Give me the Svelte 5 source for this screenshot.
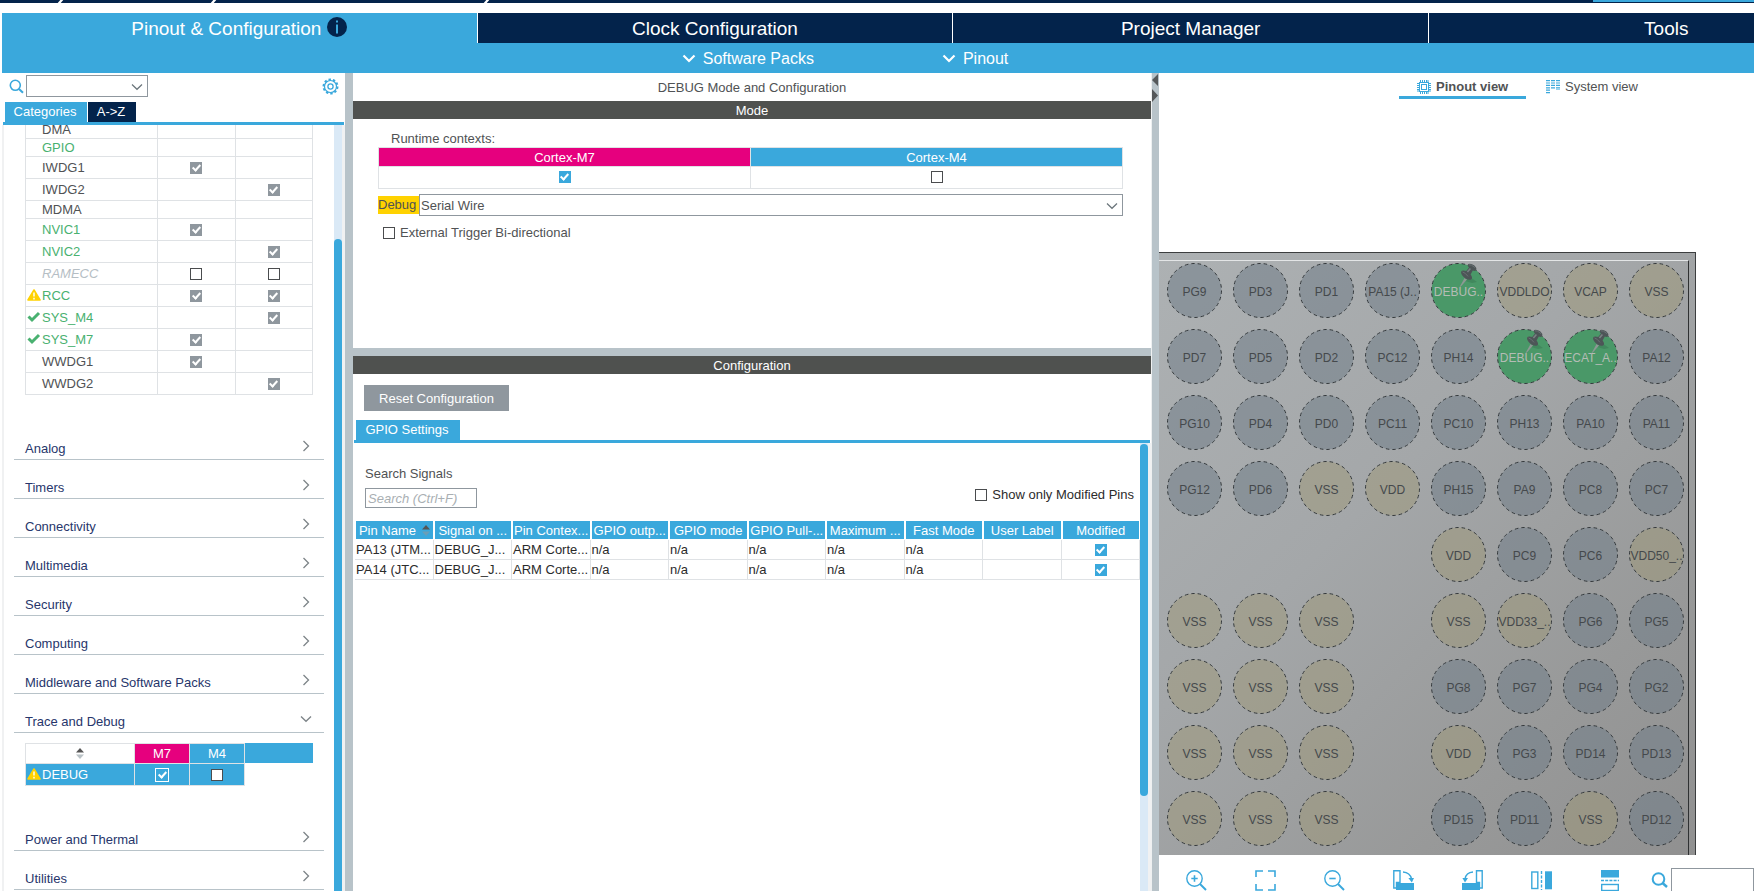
<script lang="ts">
	type Ip = { name: string; m7?: boolean; m4?: boolean; state?: string; icon?: string };

	const mainTabs = ['Pinout & Configuration', 'Clock Configuration', 'Project Manager', 'Tools'];

	// m7 / m4 left out means that no box is drawn for that core
	const systemCore: Ip[] = [
		{ name: 'DMA' },
		{ name: 'GPIO', state: 'used' },
		{ name: 'IWDG1', m7: true },
		{ name: 'IWDG2', m4: true },
		{ name: 'MDMA' },
		{ name: 'NVIC1', m7: true, state: 'used' },
		{ name: 'NVIC2', m4: true, state: 'used' },
		{ name: 'RAMECC', m7: false, m4: false, state: 'off' },
		{ name: 'RCC', m7: true, m4: true, state: 'used', icon: 'warning' },
		{ name: 'SYS_M4', m4: true, state: 'used', icon: 'ok' },
		{ name: 'SYS_M7', m7: true, state: 'used', icon: 'ok' },
		{ name: 'WWDG1', m7: true },
		{ name: 'WWDG2', m4: true }
	];

	const categories = [
		'Analog',
		'Timers',
		'Connectivity',
		'Multimedia',
		'Security',
		'Computing',
		'Middleware and Software Packs',
		'Trace and Debug',
		'Power and Thermal',
		'Utilities'
	];
	let open = $state('Trace and Debug');

	const columns = [
		'Pin Name',
		'Signal on ...',
		'Pin Contex...',
		'GPIO outp...',
		'GPIO mode',
		'GPIO Pull-...',
		'Maximum ...',
		'Fast Mode',
		'User Label',
		'Modified'
	];
	const signals = [
		['PA13 (JTM...', 'DEBUG_J...', 'ARM Corte...', 'n/a', 'n/a', 'n/a', 'n/a', 'n/a', ''],
		['PA14 (JTC...', 'DEBUG_J...', 'ARM Corte...', 'n/a', 'n/a', 'n/a', 'n/a', 'n/a', '']
	];

	// empty string = no ball at that place
	const balls = [
		['PG9', 'PD3', 'PD1', 'PA15 (J..', 'DEBUG..', 'VDDLDO', 'VCAP', 'VSS'],
		['PD7', 'PD5', 'PD2', 'PC12', 'PH14', 'DEBUG..', 'ECAT_A..', 'PA12'],
		['PG10', 'PD4', 'PD0', 'PC11', 'PC10', 'PH13', 'PA10', 'PA11'],
		['PG12', 'PD6', 'VSS', 'VDD', 'PH15', 'PA9', 'PC8', 'PC7'],
		['', '', '', '', 'VDD', 'PC9', 'PC6', 'VDD50_..'],
		['VSS', 'VSS', 'VSS', '', 'VSS', 'VDD33_..', 'PG6', 'PG5'],
		['VSS', 'VSS', 'VSS', '', 'PG8', 'PG7', 'PG4', 'PG2'],
		['VSS', 'VSS', 'VSS', '', 'VDD', 'PG3', 'PD14', 'PD13'],
		['VSS', 'VSS', 'VSS', '', 'PD15', 'PD11', 'VSS', 'PD12']
	];

	function ballKind(name: string) {
		if (name.startsWith('V')) return 'power';
		if (name.startsWith('DEBUG') || name.startsWith('ECAT')) return 'assigned';
		return 'io';
	}

	function toggle(name: string) {
		open = open === name ? '' : name;
	}
</script>

{#snippet warning()}
	<svg class="mark" width="14" height="12" viewBox="0 0 14 12">
		<path d="M7 1 L13 11 H1 Z" fill="#ffd200" stroke="#ffd200" stroke-width="1.6" stroke-linejoin="round" />
		<path d="M7 3.6 V7.6 M7 8.8 V10.4" stroke="#fff" stroke-width="1.4" />
	</svg>
{/snippet}

{#snippet down(color: string)}
	<svg width="12" height="8" viewBox="0 0 12 8">
		<path d="M1 1.5 L6 6.3 L11 1.5" fill="none" stroke={color} stroke-width="1.2" />
	</svg>
{/snippet}

{#snippet sorter()}
	<svg width="8" height="11" viewBox="0 0 8 11">
		<path d="M4 0 L8 4.5 H0 Z" fill="#555" />
		<path d="M4 11 L8 6.5 H0 Z" fill="#8a979f" opacity="0.6" />
	</svg>
{/snippet}

{#snippet core(name: string, cpu: string, value: boolean | undefined)}
	<td class="core">
		{#if value !== undefined}
			<input type="checkbox" class="locked" checked={value} disabled aria-label="{name} {cpu}" />
		{/if}
	</td>
{/snippet}

<div class="app">
	<div class="crumbs">
		<i class="c1"></i><i class="c2"></i><i class="c3"></i>
		<b></b>
	</div>

	<header>
		<nav class="main-tabs">
			{#each mainTabs as tab, i}
				<button class:active={i === 0}>
					<span>{tab}</span>
					{#if i === 0}
						<svg width="20" height="20" viewBox="0 0 20 20">
							<circle cx="10" cy="10" r="10" fill="#03234b" />
							<path d="M10 3.4 V5.6 M10 7.4 V16.6" stroke="#3aa8dc" stroke-width="2" />
						</svg>
					{/if}
				</button>
			{/each}
		</nav>
		<div class="sub-tabs">
			{#each ['Software Packs', 'Pinout'] as item}
				<button>
					<svg width="14" height="9" viewBox="0 0 14 9">
						<path d="M1.5 1.5 L7 7 L12.5 1.5" fill="none" stroke="#fff" stroke-width="2.2" />
					</svg>
					<span>{item}</span>
				</button>
			{/each}
		</div>
	</header>

	<main>
		<aside>
			<div class="finder">
				<svg width="15" height="15" viewBox="0 0 15 15">
					<circle cx="6.3" cy="6.3" r="5" fill="none" stroke="#3aa8dc" stroke-width="1.6" />
					<path d="M10 10 L14 13.8" stroke="#3aa8dc" stroke-width="2" />
				</svg>
				<span class="combo">
					<select aria-label="Search peripheral"><option></option></select>
					{@render down('#6b757b')}
				</span>
				<button class="gear" aria-label="Settings">
					<svg width="17" height="17" viewBox="0 0 17 17" fill="none" stroke="#3aa8dc">
						<circle cx="8.5" cy="8.5" r="7" stroke-width="2" stroke-dasharray="2.4 2" />
						<circle cx="8.5" cy="8.5" r="6" stroke-width="1.2" />
						<circle cx="8.5" cy="8.5" r="2.6" stroke-width="1.3" />
					</svg>
				</button>
			</div>
			<div class="tabs">
				<button class="categories">Categories</button>
				<button class="az">A-&gt;Z</button>
			</div>

			<div class="tree">
				<div class="tree-body">
					<table class="ips">
						<tbody>
							{#each systemCore as ip}
								<tr class:tall={ip.m7 !== undefined || ip.m4 !== undefined}>
									<td class="name {ip.state}">
										<span class="slot">
											{#if ip.icon === 'warning'}
												{@render warning()}
											{:else if ip.icon === 'ok'}
												<svg class="mark" width="14" height="12" viewBox="0 0 14 12">
													<path d="M1.5 5.5 L5 9 L12 2" fill="none" stroke="#49b170" stroke-width="3" />
												</svg>
											{/if}
										</span>{ip.name}
									</td>
									{@render core(ip.name, 'M7', ip.m7)}
									{@render core(ip.name, 'M4', ip.m4)}
								</tr>
							{/each}
						</tbody>
					</table>

					{#each categories as category}
						<button class="category" onclick={() => toggle(category)}>
							{category}
							<svg width="12" height="12" viewBox="0 0 12 12" fill="none" stroke="#7d8488" stroke-width="1.3">
								<path d={open === category ? 'M1 3.5 L6 8.3 L11 3.5' : 'M3.5 1 L8.5 6 L3.5 11'} />
							</svg>
						</button>
						{#if open === category}
							<div class="debug-wrap">
								<table class="debug">
									<thead>
										<tr>
											<th class="plain">{@render sorter()}</th>
											<th class="m7">M7</th>
											<th>M4</th>
										</tr>
									</thead>
									<tbody>
										<tr>
											<td><span class="slot">{@render warning()}</span>DEBUG</td>
											<td class="core"><input type="checkbox" class="outlined" checked aria-label="DEBUG M7" /></td>
											<td class="core"><input type="checkbox" aria-label="DEBUG M4" /></td>
										</tr>
									</tbody>
								</table>
								<div class="filler"></div>
							</div>
						{/if}
					{/each}
				</div>
				<div class="track"><div class="thumb tree-thumb"></div></div>
			</div>
		</aside>

		<div class="splitter"></div>

		<section class="center">
			<h1>DEBUG Mode and Configuration</h1>
			<h2>Mode</h2>
			<div class="mode">
				<p>Runtime contexts:</p>
				<table class="contexts">
					<thead>
						<tr><th class="m7">Cortex-M7</th><th>Cortex-M4</th></tr>
					</thead>
					<tbody>
						<tr>
							<td><input type="checkbox" checked aria-label="Cortex-M7" /></td>
							<td><input type="checkbox" aria-label="Cortex-M4" /></td>
						</tr>
					</tbody>
				</table>
				<div class="debug-row">
					<label for="debug-mode">Debug</label>
					<span class="combo">
						<select id="debug-mode"><option>Serial Wire</option></select>
						{@render down('#6b757b')}
					</span>
				</div>
				<label class="check"><input type="checkbox" />External Trigger Bi-directional</label>
			</div>
			<div class="hsplit"></div>
			<h2>Configuration</h2>
			<div class="config">
				<button class="reset">Reset Configuration</button>
				<div class="tabs"><button class="settings">GPIO Settings</button></div>
				<div class="settings-area">
					<div class="settings-body">
						<div class="filter">
							<div class="signal-search">
								<label for="signal-search">Search Signals</label>
								<input id="signal-search" type="text" placeholder="Search (Ctrl+F)" />
							</div>
							<label class="check dark"><input type="checkbox" />Show only Modified Pins</label>
						</div>
						<table class="signals">
							<thead>
								<tr>
									{#each columns as column, i}
										<th>
											{column}
											{#if i === 0}{@render sorter()}{/if}
										</th>
									{/each}
								</tr>
							</thead>
							<tbody>
								{#each signals as signal}
									<tr>
										{#each signal as value}
											<td>{value}</td>
										{/each}
										<td class="core"><input type="checkbox" checked aria-label="{signal[0]} modified" /></td>
									</tr>
								{/each}
							</tbody>
						</table>
					</div>
					<div class="track"><div class="thumb settings-thumb"></div></div>
				</div>
			</div>
		</section>

		<div class="splitter arrows">
			<svg width="7" height="30" viewBox="0 0 7 30" fill="#55585a">
				<path d="M6 1 V13 L0 7 Z M0 16 V29 L6 22.5 Z" />
			</svg>
		</div>

		<section class="pinout">
			<div class="view-tabs">
				<button class="selected">
					<svg width="14" height="14" viewBox="0 0 14 14" fill="none" stroke="#3aa8dc">
						<path d="M3.5 0 V14 M5.5 0 V14 M7.5 0 V14 M9.5 0 V14 M11 0 V14 M0 3.5 H14 M0 5.5 H14 M0 7.5 H14 M0 9.5 H14 M0 11 H14" />
						<rect x="2.5" y="2.5" width="9" height="9" fill="#fff" />
						<rect x="4.5" y="4.5" width="5" height="5" />
					</svg>
					Pinout view
				</button>
				<button>
					<svg width="14" height="14" viewBox="0 0 14 14" fill="none" stroke="#3aa8dc" stroke-width="4">
						<path d="M2 0 V14" stroke-dasharray="1.2 1.2" />
						<path d="M7 0 V9" stroke-dasharray="1.2 1.2" />
						<path d="M12 0 V10" stroke-dasharray="1.2 1.2" />
					</svg>
					System view
				</button>
			</div>

			<div class="canvas">
				<div class="package">
					<div class="die">
						{#each balls as row}
							{#each row as ball}
								{#if ball}
									<button class="ball {ballKind(ball)}">
										<svg class="disc" width="55" height="55" viewBox="0 0 55 55">
											<circle cx="27.5" cy="27.5" r="27" stroke="#34393c" stroke-dasharray="3.5 3" />
										</svg>
										<span>{ball}</span>
										{#if ballKind(ball) === 'assigned'}
											<svg class="pin" width="20" height="26" viewBox="0 0 20 26">
												<path d="M12 14 L19 19 L14 20 L7 18 Z" fill="#35704d" opacity="0.4" />
												<path d="M6.6 15 L1 25 L3.8 22.6 L9 16.4 Z" fill="#8d9894" />
												<path d="M3 9.5 Q3 7.4 5.4 7.6 L8.2 8 L11 4.6 Q8.6 2 10.4 .9 Q13 0 16.4 2.4 Q19 4.6 18.2 7 Q17.4 8.6 14.8 7.6 L12.6 11.4 Q15 14.6 13.4 16.2 Q11.4 17.6 7.4 15.4 Q3.4 12.8 3 9.5 Z" fill="#4d5557" />
												<path d="M10.8 1.8 Q13 1 17 4.6 M4.6 9 Q7 9.4 10 13.4" fill="none" stroke="#697174" stroke-width="1" />
												<path d="M9.4 9 L12.4 5.4" stroke="#798184" stroke-width="1.6" />
											</svg>
										{/if}
									</button>
								{:else}
									<span></span>
								{/if}
							{/each}
						{/each}
					</div>
				</div>
			</div>

			<div class="tools">
				<button aria-label="Zoom in">
					<svg width="21" height="21" viewBox="0 0 21 21">
						<circle cx="8.5" cy="8.5" r="7.7" /><path d="M14 14 L20 20" stroke-width="2" />
						<path d="M8.5 5.3 V11.7 M5.3 8.5 H11.7" stroke-width="1.6" />
					</svg>
				</button>
				<button aria-label="Best fit">
					<svg width="21" height="21" viewBox="0 0 21 21">
						<path d="M1 7 V1 H8 M13 1 H20 V7 M20 14 V20 H13 M8 20 H1 V14" stroke-width="1.6" />
					</svg>
				</button>
				<button aria-label="Zoom out">
					<svg width="21" height="21" viewBox="0 0 21 21">
						<circle cx="8.5" cy="8.5" r="7.7" /><path d="M14 14 L20 20" stroke-width="2" />
						<path d="M5.3 8.5 H11.7" stroke-width="1.6" />
					</svg>
				</button>
				<button aria-label="Rotate clockwise">
					<svg width="21" height="21" viewBox="0 0 21 21">
						<path d="M.8 .8 H7 V12.5 H3.5 V18 H.8 Z" />
						<path d="M3 13 H21 V20 H3 Z" class="solid" />
						<path d="M10 2 Q17 2.5 18.6 9" /><path d="M15.4 8 H21 L18.8 12.5 Z" class="solid" />
					</svg>
				</button>
				<button aria-label="Rotate counterclockwise">
					<svg width="21" height="21" viewBox="0 0 21 21">
						<path d="M20.2 .8 H14.5 V12.5 H17.5 V18 H20.2 Z" />
						<path d="M0 13 H18 V20 H0 Z" class="solid" />
						<path d="M11 2 Q4 2.5 3 9" /><path d="M.4 8 H6 L3 12.5 Z" class="solid" />
					</svg>
				</button>
				<button aria-label="Flip horizontally">
					<svg width="21" height="21" viewBox="0 0 21 21">
						<rect x=".8" y="2" width="6" height="16.5" />
						<path d="M10.5 1 V20" stroke-dasharray="3 1.5" />
						<rect x="14" y="1.3" width="7" height="18" class="solid" />
					</svg>
				</button>
				<button aria-label="Flip vertically">
					<svg width="21" height="21" viewBox="0 0 21 21">
						<rect x="1" y="0" width="18" height="7.5" class="solid" />
						<path d="M1 10.5 H19" stroke-dasharray="3 1.2" />
						<rect x="1.7" y="14.5" width="16.6" height="6" />
					</svg>
				</button>
				<label for="pin-search">
					<svg width="17" height="17" viewBox="0 0 17 17">
						<circle cx="7.5" cy="8" r="5.8" stroke-width="2" /><path d="M11.5 12 L16 16" stroke-width="2.4" />
					</svg>
				</label>
				<input id="pin-search" type="text" aria-label="Search pin" />
			</div>
		</section>
	</main>
</div>

<style>
	:global(body) {
		margin: 0;
		overflow: hidden;
	}

	.app {
		--blue: #3aa8dc;
		--navy: #03234b;
		--pink: #e6007e;
		--grey: #b8c3c9;
		--line: #dfe2e5;
		height: 100vh;
		display: flex;
		flex-direction: column;
		overflow: hidden;
		background: #fff;
		color: #505254;
		font: 13px/16px 'Liberation Sans', Arial, sans-serif;
	}

	button,
	select,
	input {
		font: inherit;
		color: inherit;
		border: none;
		border-radius: 0;
		background: none;
		padding: 0;
		margin: 0;
		box-sizing: border-box;
	}

	svg {
		display: block;
		flex: none;
	}

	h1,
	h2,
	p {
		margin: 0;
		font: inherit;
	}

	table {
		border-collapse: collapse;
		table-layout: fixed;
	}

	th,
	td {
		padding: 0;
		font-weight: normal;
		white-space: nowrap;
	}

	input[type='checkbox'] {
		appearance: none;
		display: grid;
		place-content: center;
		flex: none;
		width: 12px;
		height: 12px;
		background: #fff;
		border: 1px solid #4a4c4e;
	}

	input[type='checkbox']:checked {
		background: var(--blue);
		border-color: var(--blue);
	}

	input[type='checkbox']:checked::before {
		content: '';
		width: 3px;
		height: 6px;
		margin-bottom: 2px;
		border: solid #fff;
		border-width: 0 2px 2px 0;
		transform: rotate(42deg);
	}

	input.locked:checked {
		background: #8f979e;
		border-color: #8f979e;
	}

	input[type='checkbox'].outlined {
		width: 14px;
		height: 14px;
		border-color: #fff;
	}

	/* header */
	.crumbs {
		display: flex;
		flex: none;
		height: 3px;
		overflow: hidden;
		background: var(--navy);
	}

	.crumbs i {
		border-right: 3px solid #fff;
		box-sizing: border-box;
		transform: skewX(-40deg);
	}

	.c1 {
		width: 62px;
	}

	.c2 {
		width: 153px;
	}

	.c3 {
		width: 273px;
	}

	.crumbs b {
		width: 161px;
		height: 2px;
		margin-left: auto;
		background: var(--blue);
	}

	header {
		flex: none;
		margin: 10px 0 0 2px;
		background: var(--blue);
		color: #fff;
		overflow: hidden;
	}

	.main-tabs {
		display: flex;
		height: 30px;
		font-size: 19px;
	}

	.main-tabs button {
		display: flex;
		align-items: center;
		justify-content: center;
		gap: 6px;
		flex: 0 0 27.15%;
		background: var(--navy);
		border-right: 1px solid #fff;
	}

	.main-tabs button.active {
		background: var(--blue);
	}

	.main-tabs svg {
		margin-bottom: 2px;
	}

	.main-tabs span,
	.sub-tabs span {
		padding-top: 2px;
	}

	.sub-tabs {
		display: flex;
		gap: 128px;
		height: 30px;
		padding-left: 38.8%;
		font-size: 16px;
	}

	.sub-tabs button {
		display: flex;
		align-items: center;
		gap: 7px;
	}

	main {
		flex: 1;
		min-height: 0;
		display: grid;
		grid-template-columns: 345px 8px minmax(0, 1fr) 7px 595px;
		grid-template-rows: minmax(0, 1fr);
	}

	.splitter,
	.hsplit {
		background: var(--grey);
	}

	.hsplit {
		height: 8px;
		flex: none;
	}

	.tabs {
		display: flex;
		gap: 1px;
		height: 20px;
		border-bottom: 3px solid var(--blue);
		color: #fff;
	}

	.tabs button {
		padding-right: 2px;
		background: var(--blue);
	}

	.track {
		width: 8px;
		flex: none;
		background: #dae9f6;
		border-right: 3px solid #f0f1f2;
	}

	.thumb {
		background: var(--blue);
		border-radius: 4px;
	}

	.combo {
		position: relative;
		display: block;
	}

	.combo select {
		appearance: none;
		display: block;
		width: 100%;
		height: 22px;
		padding: 1px 0 0 1px;
		border: 1px solid #8f979e;
	}

	.combo svg {
		position: absolute;
		right: 5px;
		top: 8px;
		pointer-events: none;
	}

	/* left panel */
	aside {
		display: flex;
		flex-direction: column;
		min-height: 0;
	}

	.finder {
		display: flex;
		align-items: center;
		height: 26px;
		padding: 0 6px 3px 9px;
	}

	.finder .combo {
		width: 122px;
		margin-left: 2px;
	}

	.gear {
		margin-left: auto;
	}

	aside .tabs {
		margin: 0 1px 0 3px;
		padding-left: 2px;
	}

	.categories {
		width: 82px;
	}

	.tabs .az {
		width: 48px;
		background: var(--navy);
	}

	.tree {
		flex: 1;
		display: flex;
		min-height: 0;
		margin-left: 2px;
		border-left: 2px solid #f0f1f2;
	}

	.tree-body {
		flex: 1;
		overflow: hidden;
		padding: 0 10px;
	}

	.tree-thumb {
		margin-top: 114px;
		height: 800px;
	}

	.ips {
		width: 288px;
		margin: -5px 0 26px 11px;
	}

	.ips tr {
		height: 18px;
	}

	.ips tr.tall {
		height: 22px;
	}

	.ips td {
		border: 1px solid var(--line);
	}

	.ips .name {
		width: 131px;
		padding-top: 1px;
	}

	.used {
		color: #49b170;
	}

	.off {
		color: #b5bec4;
		font-style: italic;
	}

	.slot {
		display: inline-block;
		width: 16px;
		height: 12px;
		vertical-align: -1px;
	}

	.mark {
		margin-left: 1px;
	}

	.core input {
		margin: 0 auto;
	}

	.category {
		display: flex;
		align-items: flex-start;
		justify-content: space-between;
		width: 100%;
		height: 39px;
		padding: 20px 12px 0 11px;
		border-bottom: 1px solid var(--grey);
		color: #27366b;
	}

	.category svg {
		margin-top: -1px;
	}

	.debug-wrap {
		display: flex;
		margin: 10px 11px 26px 11px;
	}

	.debug {
		width: 220px;
		color: #fff;
	}

	.debug th,
	.debug td {
		height: 19px;
		border: 1px solid var(--line);
		background: var(--blue);
	}

	.debug td {
		height: 21px;
	}

	.debug th.plain {
		width: 108px;
		background: #fff;
	}

	.plain svg {
		margin: 0 auto;
	}

	.debug th.m7,
	.contexts th.m7 {
		background: var(--pink);
	}

	.filler {
		flex: 1;
		height: 20px;
		background: var(--blue);
	}

	/* mode and configuration */
	.center {
		display: flex;
		flex-direction: column;
		min-height: 0;
		border-right: 1px solid #eef0f1;
	}

	h1 {
		padding: 7px 0 5px;
		text-align: center;
	}

	h2 {
		flex: none;
		height: 18px;
		line-height: 19px;
		text-align: center;
		background: #4f514f;
		color: #fff;
	}

	.mode {
		flex: none;
		height: 229px;
		padding: 12px 28px 0 25px;
		box-sizing: border-box;
	}

	.mode p {
		padding-left: 13px;
	}

	.contexts {
		width: 100%;
		text-align: center;
	}

	.contexts th,
	.contexts td {
		height: 18px;
		border: 1px solid var(--line);
	}

	.contexts th {
		height: 17px;
		padding-top: 1px;
		background: var(--blue);
		color: #fff;
	}

	.contexts td {
		height: 19px;
		padding-bottom: 2px;
	}

	.contexts input {
		margin: 0 auto;
	}

	.debug-row {
		display: flex;
		align-items: center;
		margin: 5px 0 9px;
	}

	.debug-row label {
		width: 41px;
		line-height: 18px;
		background: #ffd200;
	}

	.debug-row .combo {
		flex: 1;
	}

	.check {
		display: flex;
		align-items: center;
		gap: 5px;
	}

	.mode .check {
		padding-left: 5px;
	}

	.dark {
		color: #2b2b2b;
	}

	.config {
		flex: 1;
		min-height: 0;
		display: flex;
		flex-direction: column;
		align-items: stretch;
	}

	.reset {
		align-self: flex-start;
		flex: none;
		width: 145px;
		height: 26px;
		margin: 11px 0 9px 11px;
		padding-top: 1px;
		background: #8f979e;
		color: #fff;
	}

	.config .tabs {
		flex: none;
		margin: 0 1px;
		padding-left: 2px;
	}

	.settings {
		width: 104px;
	}

	.settings-area {
		flex: 1;
		min-height: 0;
		display: flex;
	}

	.settings-body {
		flex: 1;
		padding: 23px 0 0 2px;
	}

	.settings-thumb {
		height: 352px;
		margin-top: 1px;
	}

	.filter {
		display: flex;
		justify-content: space-between;
		align-items: flex-end;
		padding: 0 6px 13px 10px;
	}

	.signal-search label {
		display: block;
		margin-bottom: 6px;
	}

	.signal-search input {
		display: block;
		width: 112px;
		height: 20px;
		padding-left: 2px;
		border: 1px solid #8f979e;
	}

	.signal-search input::placeholder {
		color: #a9afb3;
		font-style: italic;
	}

	.filter .check {
		margin-bottom: 5px;
	}

	.signals {
		width: 100%;
		border-collapse: separate;
		border-spacing: 0;
		color: #2b2b2b;
	}

	.signals th {
		height: 17px;
		padding-top: 1px;
		background: var(--blue);
		color: #fff;
		border: solid #fff;
		border-width: 0 1px 1px;
	}

	.signals th svg {
		display: inline-block;
		margin-left: 2px;
		vertical-align: -1px;
	}

	.signals td {
		height: 19px;
		padding-left: 1px;
		border: solid var(--line);
		border-width: 0 1px 1px 0;
	}

	/* pinout view */
	.pinout {
		display: flex;
		flex-direction: column;
		min-width: 0;
		min-height: 0;
		overflow: hidden;
	}

	.view-tabs {
		display: flex;
		gap: 2px;
		height: 26px;
		padding-left: 240px;
	}

	.view-tabs button {
		display: flex;
		align-items: center;
		gap: 5px;
		width: 127px;
		padding-left: 18px;
		padding-top: 4px;
		white-space: nowrap;
		border-bottom: 3px solid transparent;
	}

	.view-tabs button.selected {
		font-weight: bold;
		border-color: var(--blue);
	}

	.canvas {
		flex: 1;
		min-height: 0;
		overflow: hidden;
		padding-top: 153px;
	}

	.package {
		width: max-content;
		padding: 7px 6px 7px 0;
		background: linear-gradient(135deg, #adb1b3, #a4a7a9 40%, #989999 75%, #909090);
		border: solid #3c3e3f;
		border-width: 1px 1px 1px 0;
	}

	.die {
		display: grid;
		grid-template-columns: repeat(8, 55px);
		grid-auto-rows: 55px;
		gap: 11px;
		padding: 2px 4px 11px 8px;
		border-top: 1px solid #e3e5e6;
		border-right: 1px solid #2f3132;
	}

	.ball {
		position: relative;
		display: grid;
		place-items: center;
		font-size: 12px;
		color: #45494c;
		white-space: nowrap;
	}

	.ball > * {
		grid-area: 1 / 1;
	}

	.ball span {
		position: relative;
		padding-top: 3px;
	}

	.io .disc {
		fill: rgba(113, 125, 137, 0.55);
	}

	.power .disc {
		fill: rgba(158, 152, 120, 0.5);
	}

	.assigned .disc {
		fill: #4a9868;
	}

	.assigned span {
		color: #b4bcb5;
	}

	.pin {
		position: absolute;
		top: 0;
		right: 8px;
	}

	.tools {
		display: flex;
		flex: none;
		height: 21px;
		padding: 15px 0 0 27px;
	}

	.tools button {
		width: 69px;
	}

	.tools svg {
		fill: none;
		stroke: var(--blue);
		stroke-width: 1.4;
	}

	.tools .solid {
		fill: var(--blue);
		stroke: none;
	}

	.tools label {
		flex: none;
		width: 20px;
		margin-left: -18px;
		padding-top: 1px;
	}

	.tools input {
		flex: 1;
		min-width: 0;
		height: 26px;
		margin-top: -2px;
		border: 1px solid #8f979e;
	}
</style>
